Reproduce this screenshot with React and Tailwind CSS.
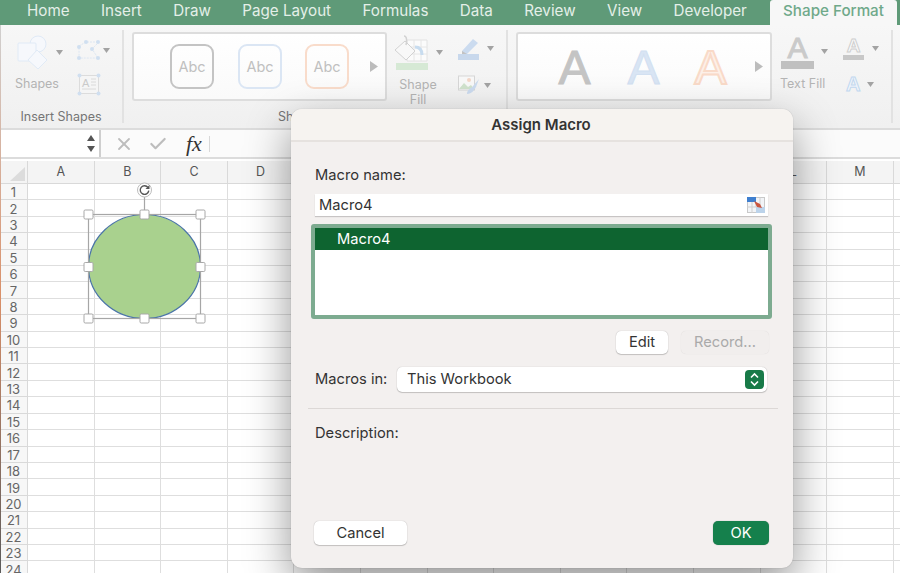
import React from "react";
import { X, Check } from "lucide-react";

const tabs = ["Home", "Insert", "Draw", "Page Layout", "Formulas", "Data", "Review", "View", "Developer"];
// E to K sit fully behind the dialog
const columns = ["A", "B", "C", "D", "", "", "", "", "", "", "", "L", "M", ""];
const rows = Array.from({ length: 24 }, (_, i) => i + 1);

function Caret({ className = "" }) {
  return (
    <svg width="7" height="5" viewBox="0 0 7 5" className={className}>
      <path d="M0 0h7L3.5 5z" fill="#a3a3a3" />
    </svg>
  );
}

function GalleryArrow() {
  return (
    <svg width="8" height="11" viewBox="0 0 8 11">
      <path d="M0 0l8 5.5L0 11z" fill="#bcbcbc" />
    </svg>
  );
}

function ShapesIcon() {
  return (
    <svg width="33" height="34" viewBox="0 0 33 34" fill="#f6f8fc" stroke="#e0eaf6" strokeWidth="1">
      <circle cx="21" cy="9" r="8" />
      <rect x="1" y="8" width="18" height="18" rx="1" />
      <path d="M20 15l10 10-9 9-10-9z" />
    </svg>
  );
}

function EditPointsIcon() {
  return (
    <svg width="24" height="20" viewBox="0 0 24 20" fill="none" stroke="#dce6f2">
      <path d="M2 6l7-4h13l-7 7 6 9H2z" strokeDasharray="2 1" />
      <g fill="#d0dff0" stroke="none">
        <circle cx="9" cy="2" r="2" />
        <circle cx="21" cy="2" r="2" />
        <circle cx="2" cy="7" r="2" />
        <circle cx="15" cy="9" r="2" />
        <circle cx="2" cy="18" r="2" />
        <circle cx="21" cy="18" r="2" />
      </g>
    </svg>
  );
}

function TextBoxIcon() {
  return (
    <svg width="24" height="23" viewBox="0 0 24 23" fill="none">
      <rect x="2.5" y="2.5" width="19" height="18" fill="#f5f5f5" stroke="#dcdcdc" />
      <text x="5" y="14" fontSize="11" fill="#cacaca" fontFamily="Liberation Sans, sans-serif">A</text>
      <path d="M14 6h5M14 9h5M14 12h5M5 16h14" stroke="#dadada" />
      <g fill="#d0dff0">
        <circle cx="2.5" cy="2.5" r="2" />
        <circle cx="21.5" cy="2.5" r="2" />
        <circle cx="2.5" cy="20.5" r="2" />
        <circle cx="21.5" cy="20.5" r="2" />
      </g>
    </svg>
  );
}

function ShapeFillIcon() {
  return (
    <svg width="34" height="35" viewBox="0 0 34 35" fill="none">
      <path d="M12 5h20v21H12z" fill="#fbfbfb" stroke="#e2e2e2" />
      <path d="M12 12h20M12 19h20M19 5v21M26 5v21" stroke="#e6e6e6" />
      <path d="M0 15L10 6l10 10-9 9z" fill="#f8f8f8" stroke="#d2d2d2" />
      <path d="M9 1c3 0 3 5 2 9" stroke="#d2d2d2" strokeWidth="1.5" />
      <path d="M20 12c5 0 7 3 7 8" stroke="#c8dcef" strokeWidth="3" />
      <rect x="1" y="28" width="32" height="7" fill="#d6e9d5" />
    </svg>
  );
}

function PenIcon() {
  return (
    <svg width="22" height="23" viewBox="0 0 22 23" fill="none">
      <path d="M4 14L15 2l5 4L9 17H4z" fill="#cbdbef" />
      <path d="M4 14v3h5z" fill="#c2c2c2" />
      <rect x="0" y="17" width="21" height="6" fill="#c8d8ec" />
    </svg>
  );
}

function EffectsIcon() {
  return (
    <svg width="22" height="21" viewBox="0 0 22 21" fill="none">
      <rect x="0.5" y="1" width="16" height="14" fill="#f8f8f8" stroke="#d6d6d6" />
      <path d="M1 14l5-6 4 4 3-2 3 4z" fill="#d0e2cd" />
      <circle cx="11" cy="5" r="2" fill="#f3d6c7" />
      <path d="M9 19c0-5 5-6 6-8l6-7-3 8c-2 3-4 7-9 7z" fill="#cbdbef" />
    </svg>
  );
}

function Gallery({ className = "", children }) {
  return (
    <div className={`flex h-[69px] items-center rounded-[3px] border-2 border-[#dddddd] bg-gradient-to-b from-white to-[#fafafa] ${className}`}>
      {children}
    </div>
  );
}

function StyleBox({ className }) {
  return (
    <div className={`flex h-[45px] w-[44px] items-center justify-center rounded-[9px] border-2 text-[14.5px] text-[#c0c0c0] ${className}`}>
      Abc
    </div>
  );
}

function Ribbon() {
  return (
    <div className="flex h-[103px] bg-gradient-to-b from-[#f7f7f7] to-[#f0f0f0] pt-[5px] text-[12.5px] text-[#b4b4b4]">
      {/* insert shapes */}
      <div className="relative h-[93px] w-[124px] shrink-0 border-r-2 border-[#e2e2e2]">
        <div className="flex pl-[15px] pt-[5px]">
          <div className="flex w-[62px] flex-col">
            <div className="flex items-center">
              <div className="ml-[2px]"><ShapesIcon /></div>
              <Caret className="ml-[6px]" />
            </div>
            <span className="mt-[7px] leading-[16px]">Shapes</span>
          </div>
          <div className="flex flex-col pt-[5px]">
            <div className="flex items-center">
              <EditPointsIcon />
              <Caret className="ml-[2px]" />
            </div>
            <div className="mt-[13px]"><TextBoxIcon /></div>
          </div>
        </div>
        <div className="absolute inset-x-0 bottom-[-2px] text-center leading-[16px] text-[#757575]">Insert Shapes</div>
      </div>

      {/* shape styles */}
      <div className="relative h-[93px] w-[384px] shrink-0 border-r-2 border-[#e2e2e2]">
        <div className="flex">
          <Gallery className="ml-[8px] mt-[2px] w-[255px] shrink-0">
            <StyleBox className="ml-[36px] border-[#c4c4c4]" />
            <StyleBox className="ml-[24px] border-[#dbe6f4]" />
            <StyleBox className="ml-[23px] border-[#f9dccb]" />
            <div className="ml-[21px]"><GalleryArrow /></div>
          </Gallery>
          <div className="ml-[8px] flex w-[60px] shrink-0 flex-col pt-[5px]">
            <div className="flex items-center">
              <ShapeFillIcon />
              <Caret className="ml-[7px] mt-[-1px]" />
            </div>
            <div className="mt-[7px] w-[46px] text-center leading-[15px]">Shape Fill</div>
          </div>
          <div className="flex flex-col pl-[3px] pt-[7px]">
            <div className="flex items-center">
              <PenIcon />
              <Caret className="ml-[7px]" />
            </div>
            <div className="mt-[15px] flex items-center">
              <EffectsIcon />
              <Caret className="ml-[4px]" />
            </div>
          </div>
        </div>
        <div className="absolute bottom-[-2px] left-[154px] leading-[16px] text-[#757575]">Shape Styles</div>
      </div>

      {/* wordart styles */}
      <div className="flex h-[93px] w-[385px] shrink-0 border-r-2 border-[#e2e2e2] pl-[8px]">
        <Gallery className="mt-[2px] w-[256px] shrink-0 font-['Liberation_Sans',sans-serif] text-[48px] leading-none">
          <span className="ml-[39px] mt-[3px] w-[35px] text-center text-[#c4c4c4] [-webkit-text-stroke:1px_#c4c4c4]">A</span>
          <span className="ml-[34px] mt-[3px] w-[35px] text-center text-[#d9e5f4] [-webkit-text-stroke:1px_#d2e0f1]">A</span>
          <span className="ml-[32px] mt-[3px] w-[35px] text-center text-[#fdf0e8] [-webkit-text-stroke:2px_#f9dac8]">A</span>
          <div className="ml-[27px]"><GalleryArrow /></div>
        </Gallery>
        <div className="ml-[9px] flex w-[62px] shrink-0 flex-col pt-[5px]">
          <div className="flex items-center">
            <div className="flex w-[33px] flex-col items-center">
              <span className="font-['Liberation_Sans',sans-serif] text-[30px] leading-[26px] text-[#cacaca] [-webkit-text-stroke:1px_#cacaca]">A</span>
              <div className="h-[8px] w-[33px] bg-[#c0c0c0]" />
            </div>
            <Caret className="ml-[7px] mt-[-2px]" />
          </div>
          <div className="-ml-px mt-[7px] leading-[16px]">Text Fill</div>
        </div>
        <div className="flex flex-col pl-[0px] pt-[7px]">
          <div className="flex items-center">
            <div className="flex w-[21px] flex-col items-center">
              <span className="font-['Liberation_Sans',sans-serif] text-[19px] font-bold leading-[17px] text-[#fafafa] [-webkit-text-stroke:1px_#cfcfcf]">A</span>
              <div className="mt-[1px] h-[5px] w-[21px] bg-[#c8c8c8]" />
            </div>
            <Caret className="ml-[8px]" />
          </div>
          <div className="ml-[3px] mt-[14px] flex items-center">
            <span className="font-['Liberation_Sans',sans-serif] text-[20px] font-bold leading-[20px] text-[#f0f5fb] [-webkit-text-stroke:1px_#c2d8ef]">A</span>
            <Caret className="ml-[7px]" />
          </div>
        </div>
      </div>
    </div>
  );
}

function FormulaBar() {
  return (
    <div className="flex h-[31px] border-y-2 border-[#dcdcdc] bg-[#fbfbfb]">
      <div className="ml-px flex w-[100px] flex-col items-end justify-center gap-[5px] border-r-2 border-[#cfcfcf] bg-white pr-[4px]">
        <svg width="8" height="6" viewBox="0 0 8 6"><path d="M4 0l4 6H0z" fill="#555555" /></svg>
        <svg width="8" height="6" viewBox="0 0 8 6"><path d="M0 0h8L4 6z" fill="#555555" /></svg>
      </div>
      <div className="flex items-center">
        <X size={20} strokeWidth={2.2} className="ml-[13px] text-[#bdbdbd]" />
        <Check size={20} strokeWidth={2.6} className="ml-[14px] text-[#bdbdbd]" />
        <span className="ml-[18px] font-['Liberation_Serif',serif] text-[22px] italic leading-none text-[#333333]">fx</span>
        <div className="ml-[7px] h-[16px] w-px bg-[#d8d8d8]" />
      </div>
    </div>
  );
}

function Sheet() {
  return (
    <div className="grid grid-cols-[28px_repeat(14,66.6px)] grid-rows-[23px_repeat(24,16.41px)] pt-[2px]">
      <div className="flex items-end justify-end border-b border-r border-[#d9d9d9] bg-[#f4f4f4] p-[2px]">
        <svg width="15" height="14" viewBox="0 0 15 14"><path d="M15 0v14H0z" fill="#dcdcdc" /></svg>
      </div>
      {columns.map((col, i) => (
        <div key={i} className="flex items-center justify-center border-b border-r border-[#d9d9d9] bg-[#f4f4f4] text-[12.5px] text-[#555555]">
          {col}
        </div>
      ))}
      {rows.map((row) => (
        <React.Fragment key={row}>
          <div className="flex items-center justify-center border-b border-r border-[#d9d9d9] bg-[#f7f7f7] pt-[2px] text-[13px] leading-none text-[#666666]">
            {row}
          </div>
          {columns.map((_, i) => (
            <div key={i} className="border-b border-r border-[#dedede] bg-white" />
          ))}
        </React.Fragment>
      ))}
    </div>
  );
}

function SelectedShape() {
  const handles = [
    [88.5, 214.5],
    [144.5, 214.5],
    [200.5, 214.5],
    [88.5, 267],
    [200.5, 267],
    [88.5, 318.5],
    [144.5, 318.5],
    [200.5, 318.5],
  ];
  return (
    <svg width="230" height="350" viewBox="0 0 230 350" className="absolute left-0 top-0 h-[350px] w-[230px]">
      <ellipse cx="144.5" cy="266.5" rx="56" ry="52" fill="#a9d18e" stroke="#4a74a8" strokeWidth="1.2" />
      <rect x="88.5" y="214.5" width="112" height="104" fill="none" stroke="#a6a6a6" strokeWidth="1.2" />
      <path d="M144.5 197v17" stroke="#a6a6a6" strokeWidth="1.2" />
      <circle cx="144.5" cy="190" r="7" fill="#ffffff" stroke="#bdbdbd" />
      <path d="M148 187.5a4.3 4.3 0 1 0 .8 3.2" fill="none" stroke="#555555" strokeWidth="1.4" />
      <path d="M149.5 185v4h-4z" fill="#555555" />
      {handles.map(([x, y]) => (
        <rect key={`${x}-${y}`} x={x - 4.5} y={y - 4.5} width="9" height="9" rx="1.2" fill="#ffffff" stroke="#a8a8a8" />
      ))}
    </svg>
  );
}

function RefEditIcon() {
  return (
    <svg width="18" height="16" viewBox="0 0 18 16">
      <rect x="0.5" y="0.5" width="17" height="15" fill="#f2f4f7" stroke="#c9c9c9" />
      <rect x="0" y="0" width="9" height="5" fill="#3f7fcf" />
      <rect x="9" y="10" width="9" height="6" fill="#bcd3ea" />
      <path d="M0 10h9M9 5v5M5 5v11M13 0v10" stroke="#cfcfcf" />
      <path d="M7 4l6 3 2 4-5-1z" fill="#c9553f" />
    </svg>
  );
}

function Dialog() {
  const button = "flex items-center justify-center rounded-[5px] bg-white text-[#333333] shadow-[0_0_1px_rgba(0,0,0,0.3),0_1px_1px_rgba(0,0,0,0.18)]";
  return (
    <div className="absolute left-[291px] top-[109px] flex h-[459px] w-[502px] flex-col overflow-hidden rounded-[11px] bg-[#f3f0ef] text-[14.7px] text-[#333333] shadow-[0_18px_45px_rgba(0,0,0,0.42),0_0_1px_rgba(0,0,0,0.3)]">
      <div className="flex h-[33px] shrink-0 items-center justify-center border-b-2 border-[#e6e2df] bg-[#f6f3f0] pr-[2px] pt-[2px] text-[15px] font-semibold">
        Assign Macro
      </div>
      <div className="flex flex-1 flex-col pl-[24px] pr-[25px]">
        <div className="mt-[23px] leading-[20px]">Macro name:</div>
        <div className="mt-[9px] flex h-[22px] items-center justify-between bg-white pl-[4px] pr-[3px] shadow-[0_1px_1px_rgba(0,0,0,0.18)]">
          <span className="pt-px">Macro4</span>
          <RefEditIcon />
        </div>
        <div className="-mx-[4px] mt-[8px] h-[95px] rounded-[3px] border-4 border-[#7dab90] bg-white">
          <div className="flex h-[22px] items-center bg-[#0e6430] pl-[22px] pt-px text-white">Macro4</div>
        </div>
        <div className="-mr-px mt-[12px] flex justify-end gap-[13px]">
          <div className={`${button} h-[23px] w-[52px]`}>Edit</div>
          <div className="flex h-[23px] w-[88px] items-center justify-center rounded-[5px] bg-[#f1eeed] text-[#aaaaaa] shadow-[0_0_1px_rgba(0,0,0,0.12)]">Record...</div>
        </div>
        <div className="mt-[13px] flex items-center">
          <span className="w-[82px] shrink-0">Macros in:</span>
          <div className="mr-px flex h-[25px] flex-1 items-center justify-between rounded-[5px] bg-white pl-[10px] pr-[3px] shadow-[0_0_1px_rgba(0,0,0,0.3),0_1px_1px_rgba(0,0,0,0.18)]">
            <span>This Workbook</span>
            <div className="flex h-[19px] w-[19px] items-center justify-center rounded-[4px] bg-[#187a48]">
              <svg width="11" height="15" viewBox="0 0 11 15" fill="none" stroke="#ffffff" strokeWidth="1.6">
                <path d="M2 5.5l3.5-3.5L9 5.5M2 9.5L5.5 13 9 9.5" />
              </svg>
            </div>
          </div>
        </div>
        <div className="-ml-[7px] -mr-[10px] mt-[16px] h-px bg-[#dcd8d6]" />
        <div className="mt-[14px] leading-[20px]">Description:</div>
        <div className="-mr-px mt-auto mb-[23px] flex justify-between">
          <div className={`${button} ml-[-1px] h-[24px] w-[93px]`}>Cancel</div>
          <div className="flex h-[24px] w-[56px] items-center justify-center rounded-[5px] bg-[#15804c] text-white shadow-[0_0_1px_rgba(0,0,0,0.4)]">OK</div>
        </div>
      </div>
    </div>
  );
}

export default function App() {
  return (
    <div className="relative h-[573px] w-[900px] overflow-hidden bg-white font-['Inter','Liberation_Sans',sans-serif]">
      <div className="flex h-[25px] bg-[#5f9a78] pl-[27px] text-[15.2px] text-[#e4efe8]">
        <div className="flex flex-1 items-center gap-[31.4px] pb-[2px]">
          {tabs.map((tab) => (
            <span key={tab}>{tab}</span>
          ))}
        </div>
        <div className="ml-[3px] mr-[3px] flex w-[127px] items-center justify-center rounded-t-[3px] bg-[#f7f7f7] pb-[2px] font-medium text-[#6fa98a]">
          Shape Format
        </div>
      </div>
      <Ribbon />
      <FormulaBar />
      <Sheet />
      <SelectedShape />
      <Dialog />
      <div className="absolute bottom-0 left-0 top-[25px] w-px bg-gradient-to-b from-[#d0d0d0] via-[#d98f68] to-[#5a5a5a]" />
    </div>
  );
}
